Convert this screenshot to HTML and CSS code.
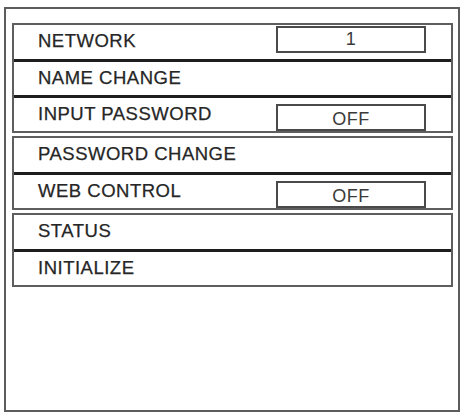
FILE: index.html
```html
<!DOCTYPE html>
<html lang="en">
<head>
  <meta charset="UTF-8">
  <title>Network Menu</title>
  <link rel="stylesheet" href="styles.css">
</head>
<body>

  <div class="frame">
    <div class="group">
      <div class="row">
        <span class="label">NETWORK</span>
        <span class="value value-up">1</span>
      </div>
      <div class="row">
        <span class="label">NAME CHANGE</span>
      </div>
      <div class="row">
        <span class="label">INPUT PASSWORD</span>
        <span class="value value-down">OFF</span>
      </div>
    </div>

    <div class="group">
      <div class="row">
        <span class="label">PASSWORD CHANGE</span>
      </div>
      <div class="row">
        <span class="label">WEB CONTROL</span>
        <span class="value value-down">OFF</span>
      </div>
    </div>

    <div class="group">
      <div class="row">
        <span class="label">STATUS</span>
      </div>
      <div class="row">
        <span class="label">INITIALIZE</span>
      </div>
    </div>
  </div>

</body>
</html>
```

FILE: styles.css
```css
* {
  box-sizing: border-box;
  margin: 0;
  padding: 0;
}
html, body {
  background: #fff;
  font-family: 'Liberation Sans', Arial, sans-serif;
  color: #262626;
}
.frame {
  margin: 7px 2px 0 4px;
  width: 456px;
  height: 405px;
  border: 2px solid #5c5c5c;
  padding: 14px 5px 0 6px;
  display: flex;
  flex-direction: column;
  gap: 3px;
}
.group {
  border: 2px solid #5e5e5e;
}
.row {
  height: 34px;
  display: flex;
  align-items: center;
  padding-left: 24px;
}
.row + .row {
  height: 36px;
  border-top: 3px solid #1e1e1e;
}
.label {
  font-size: 18.5px;
  letter-spacing: 0.5px;
  width: 238px;
  margin-top: -2px;
  -webkit-text-stroke: 0.25px #262626;
}
.value {
  width: 150px;
  height: 27px;
  border: 2px solid #4a4a4a;
  font-size: 18px;
  letter-spacing: 0.5px;
  color: #3a3a3a;
  display: flex;
  align-items: center;
  justify-content: center;
}
.value-up {
  margin-top: -5px;
}
.value-down {
  margin-top: 6px;
  padding-top: 3px;
}
```
